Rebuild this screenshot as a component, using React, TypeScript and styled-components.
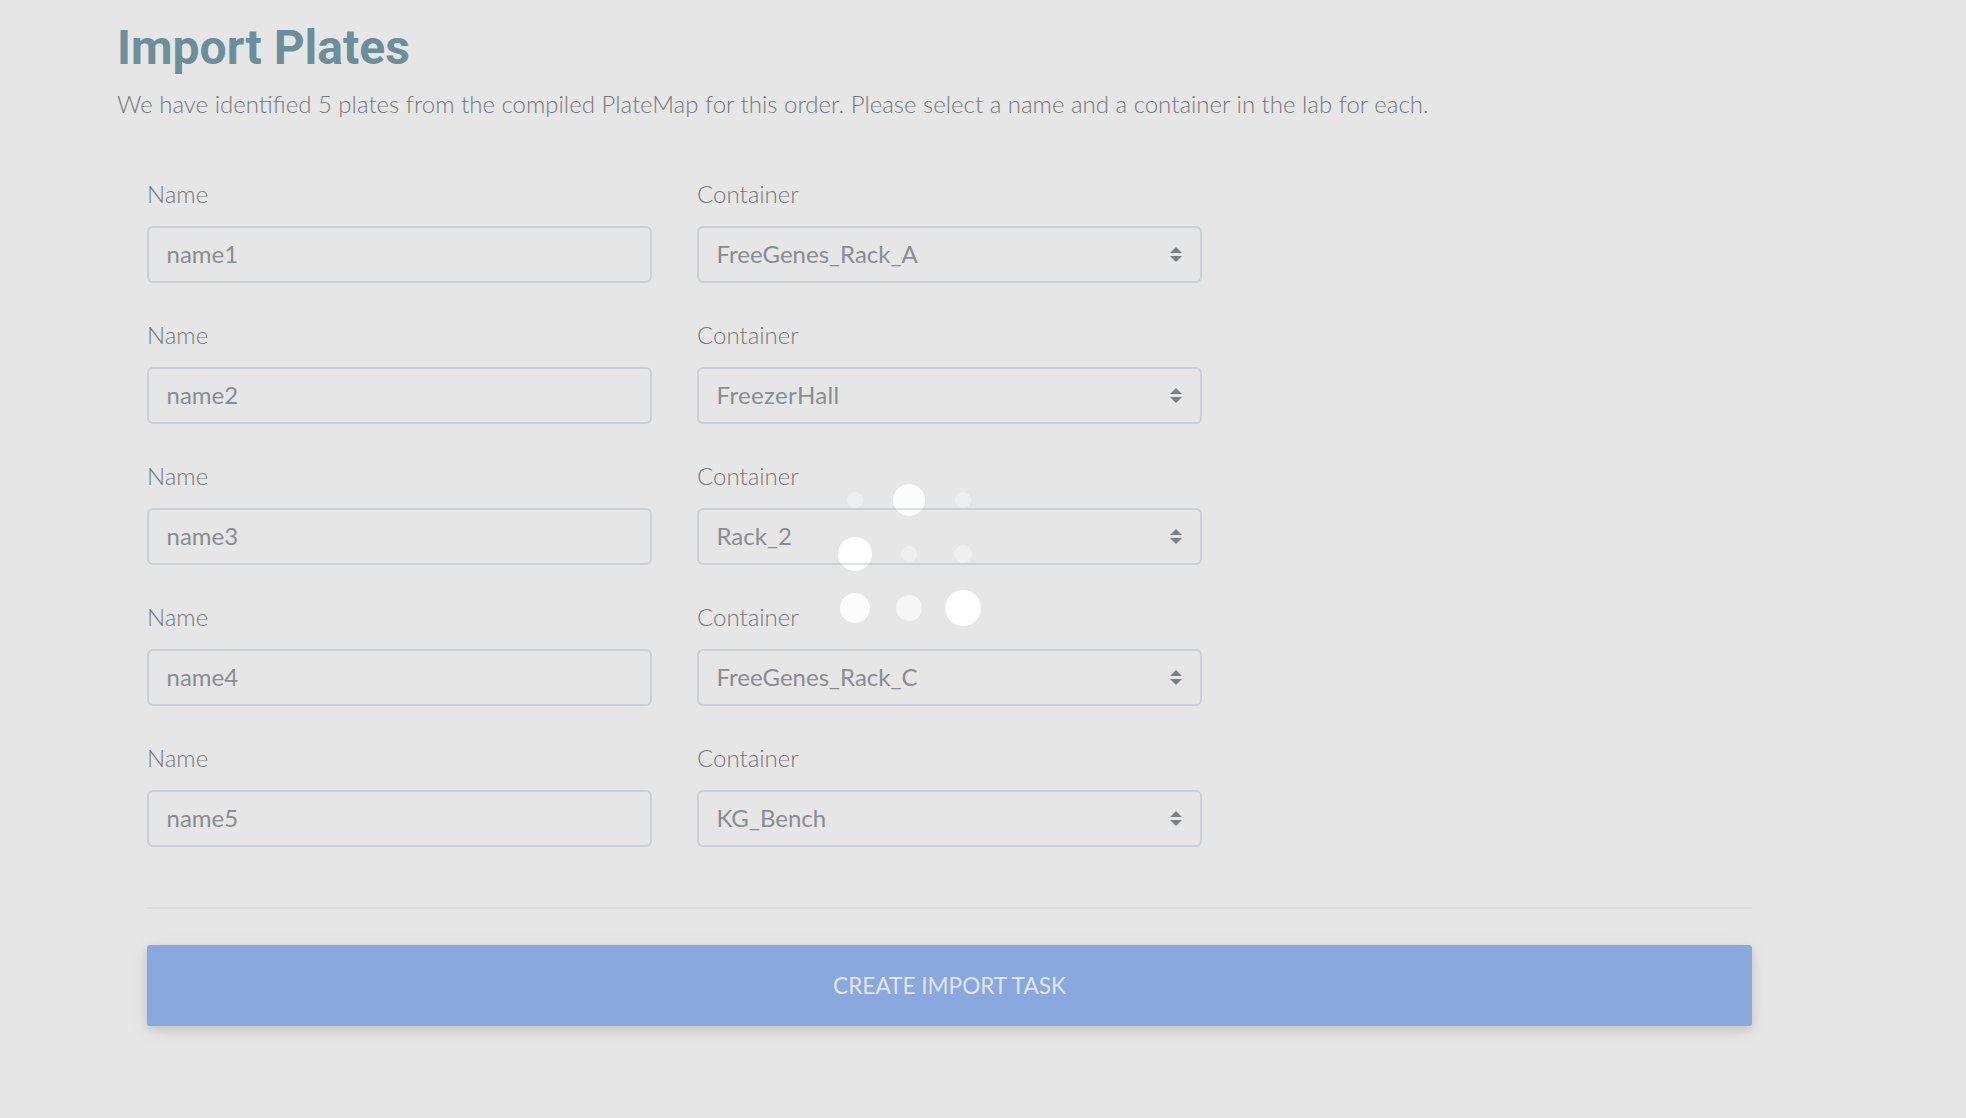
import React from "react";
import styled, { createGlobalStyle } from "styled-components";

const GlobalStyle = createGlobalStyle`
  * { box-sizing: border-box; }
  html, body { margin: 0; padding: 0; background: #e6e6e6; }
  body { font-family: Lato, "Liberation Sans", sans-serif; font-size: 24px; overflow: hidden; }
`;

const Page = styled.main`
  position: relative;
  z-index: 0;
  width: 1966px;
  height: 1118px;
  padding: 19px 214px 0 117px;
  background: #e6e6e6;
`;

const Title = styled.h1`
  margin: 0;
  font: 700 48px/58px Roboto, "Liberation Sans", sans-serif;
  color: #6a8f9a;
`;

const Intro = styled.p`
  margin: 9px 0 0;
  font-weight: 300;
  line-height: 36px;
  color: #76797c;
  white-space: nowrap;
`;

const Form = styled.form`
  padding: 54px 0 0 30px;
`;

const Row = styled.div`
  display: grid;
  grid-template-columns: 505px 505px;
  column-gap: 45px;
  margin-bottom: 30px;
`;

const Field = styled.div`
  display: flex;
  flex-direction: column;
`;

const Label = styled.label`
  height: 36px;
  margin-bottom: 14px;
  font-weight: 300;
  line-height: 36px;
  color: #76797c;
`;

const Control = styled.div<{ $tracking?: number }>`
  display: flex;
  align-items: center;
  justify-content: space-between;
  height: 57px;
  margin-bottom: 4px;
  padding: 0 18px 2px 17.5px;
  border: 2px solid rgba(141, 160, 172, 0.3);
  border-radius: 6px;
  line-height: 36px;
  letter-spacing: ${(p) => p.$tracking ?? 0}px;
  color: #8a8d91;
`;

const TextInput = styled.input`
  width: 100%;
  padding: 0;
  border: 0;
  outline: 0;
  background: transparent;
  font: inherit;
  color: inherit;
`;

const Arrows = styled.svg`
  margin-top: 1px;
`;

const Divider = styled.hr`
  height: 2px;
  margin: 56px 0 36px;
  border: 0;
  background: #dadada;
`;

const SubmitButton = styled.button`
  width: 100%;
  height: 81px;
  border: 0;
  border-radius: 3px;
  background: #88a8de;
  box-shadow: 0 4px 10px rgba(0, 0, 0, 0.1), 0 4px 20px rgba(0, 0, 0, 0.07);
  font: 400 22.6px/36px Lato, "Liberation Sans", sans-serif;
  color: #e3e4e6;
  text-transform: uppercase;
`;

const Loader = styled.div`
  position: absolute;
  z-index: -1;
  left: 828px;
  top: 473px;
  display: grid;
  grid-template-columns: repeat(3, 54px);
  grid-template-rows: repeat(3, 54px);
  place-items: center;
`;

const Dot = styled.span<{ $size: number; $alpha: number }>`
  width: ${(p) => p.$size}px;
  height: ${(p) => p.$size}px;
  border-radius: 50%;
  background: rgba(255, 255, 255, ${(p) => p.$alpha});
`;

const plates = [
  { name: "name1", container: "FreeGenes_Rack_A" },
  { name: "name2", container: "FreezerHall", tracking: 0.35 },
  { name: "name3", container: "Rack_2" },
  { name: "name4", container: "FreeGenes_Rack_C" },
  { name: "name5", container: "KG_Bench" },
];

const dots = [
  [16, 0.34], [32, 0.88], [16, 0.34],
  [34, 0.98], [16, 0.34], [18, 0.38],
  [30, 0.86], [26, 0.64], [36, 1],
];

const SelectArrows = () => (
  <Arrows width="12" height="15" viewBox="0 0 12 15" fill="#7c8083">
    <path d="M0 6 6 0l6 6zM0 9h12l-6 6z" />
  </Arrows>
);

export default function App() {
  return (
    <>
      <GlobalStyle />
      <Page>
        <Title>Import Plates</Title>
        <Intro>
          We have identified 5 plates from the compiled PlateMap for this order. Please select a name and a container in the lab for each.
        </Intro>
        <Form onSubmit={(e) => e.preventDefault()}>
          {plates.map((plate) => (
            <Row key={plate.name}>
              <Field>
                <Label htmlFor={plate.name}>Name</Label>
                <Control>
                  <TextInput id={plate.name} defaultValue={plate.name} />
                </Control>
              </Field>
              <Field>
                <Label>Container</Label>
                <Control $tracking={plate.tracking}>
                  <span>{plate.container}</span>
                  <SelectArrows />
                </Control>
              </Field>
            </Row>
          ))}
          <Divider />
          <SubmitButton type="submit">Create import task</SubmitButton>
        </Form>
        <Loader>
          {dots.map(([size, alpha], i) => (
            <Dot key={i} $size={size} $alpha={alpha} />
          ))}
        </Loader>
      </Page>
    </>
  );
}
